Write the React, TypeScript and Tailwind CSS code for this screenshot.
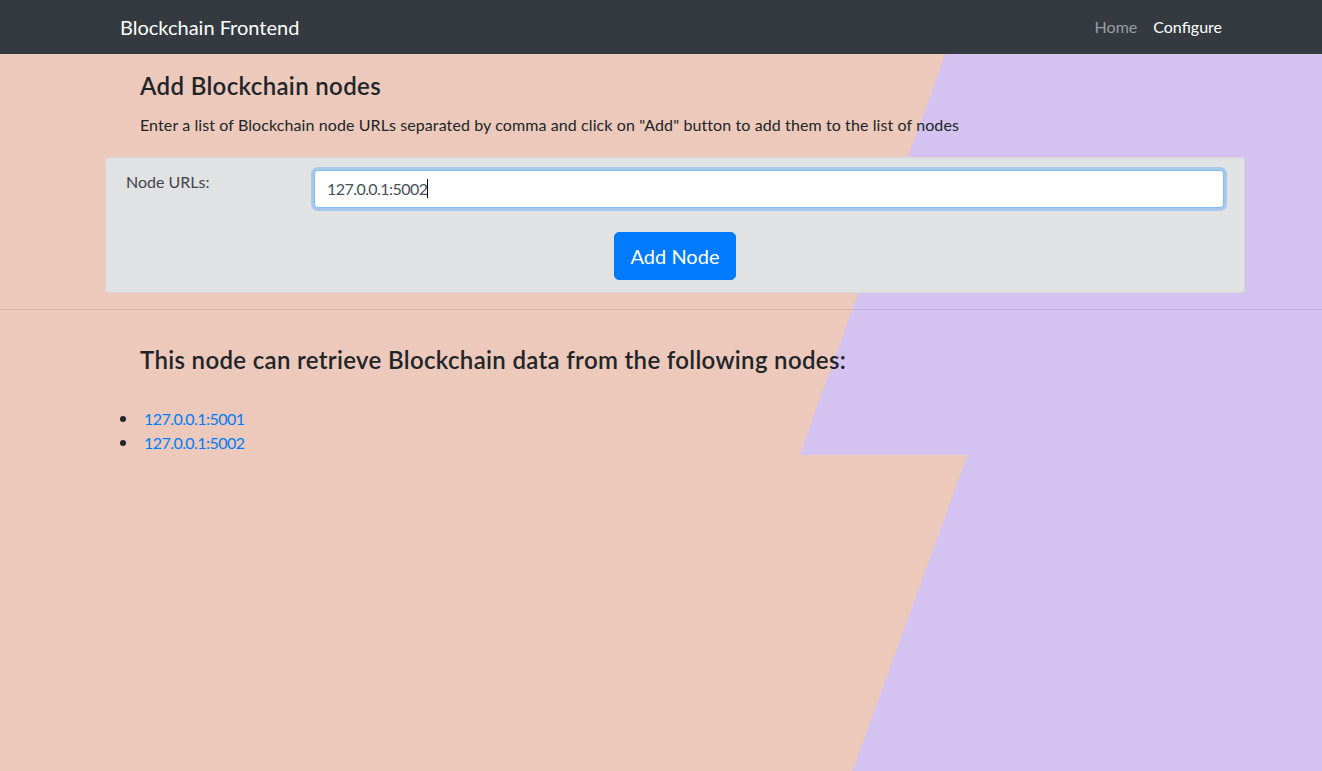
import React from "react";

const nodes = ["127.0.0.1:5001", "127.0.0.1:5002"];

function NavBar() {
  return (
    <nav className="h-[54px] bg-[#343a40] flex items-center justify-between pl-[120px] pr-[92px]">
      <span className="text-[20px] leading-[30px] text-white">Blockchain Frontend</span>
      <div className="flex items-center text-[16px] leading-[24px]">
        <a href="#" className="px-2 text-white/50">Home</a>
        <a href="#" className="px-2 text-white">Configure</a>
      </div>
    </nav>
  );
}

function App() {
  return (
    <div className="min-h-screen bg-[linear-gradient(110deg,#ecc9bb_70.7%,#d4c3f0_70.7%)] font-['Lato',sans-serif] text-[#212529] text-[16px] leading-[24px]">
      <NavBar />
      <div className="bg-[linear-gradient(110deg,#ecc9bb_64.4%,#d4c3f0_64.4%)]">
        <div className="ml-[105px] w-[1140px]">
          <div className="pl-[35px] pt-[18px]">
            <h4 className="text-[24px] leading-[1.2] font-semibold tracking-[0.35px]">Add Blockchain nodes</h4>
            <p className="mt-3 tracking-[0.1px]">
              Enter a list of Blockchain node URLs separated by comma and click on "Add" button to add them to the list of nodes
            </p>
          </div>

          <div className="mt-5 bg-[#e1e2e4] border border-[#d5d6d8] rounded-[4px] px-5 py-3">
            <div className="flex">
              <label className="w-[188px] text-[#3e444a]">Node URLs:</label>
              <div className="flex-1">
                <div className="h-[38px] bg-white border border-[#80bdff] rounded-[4px] shadow-[0_0_0_3px_rgba(0,123,255,0.25)] px-3 flex items-center text-[#495057]">
                  <span className="tracking-[-0.55px]">127.0.0.1:5002</span>
                  <span className="w-px h-[19px] bg-black" />
                </div>
              </div>
            </div>
            <div className="mt-6 flex justify-center">
              <button className="bg-[#007bff] border border-[#007bff] text-white text-[20px] leading-[30px] px-4 py-2 rounded-[5px]">
                Add Node
              </button>
            </div>
          </div>
        </div>

        <hr className="mt-4 border-0 border-t border-black/10" />

        <div className="ml-[105px] w-[1140px]">
          <h4 className="pl-[35px] mt-[36px] text-[24px] leading-[1.2] font-semibold tracking-[0.33px]">
            This node can retrieve Blockchain data from the following nodes:
          </h4>
          <ul className="mt-[32px] ml-[15px]">
            {nodes.map((node) => (
              <li key={node} className="flex items-center">
                <span className="w-[6px] h-[6px] rounded-full bg-[#212529] mr-[18px]" />
                <a href="#" className="text-[#007bff] tracking-[-0.55px]">{node}</a>
              </li>
            ))}
          </ul>
        </div>
      </div>
    </div>
  );
}

export default App;
